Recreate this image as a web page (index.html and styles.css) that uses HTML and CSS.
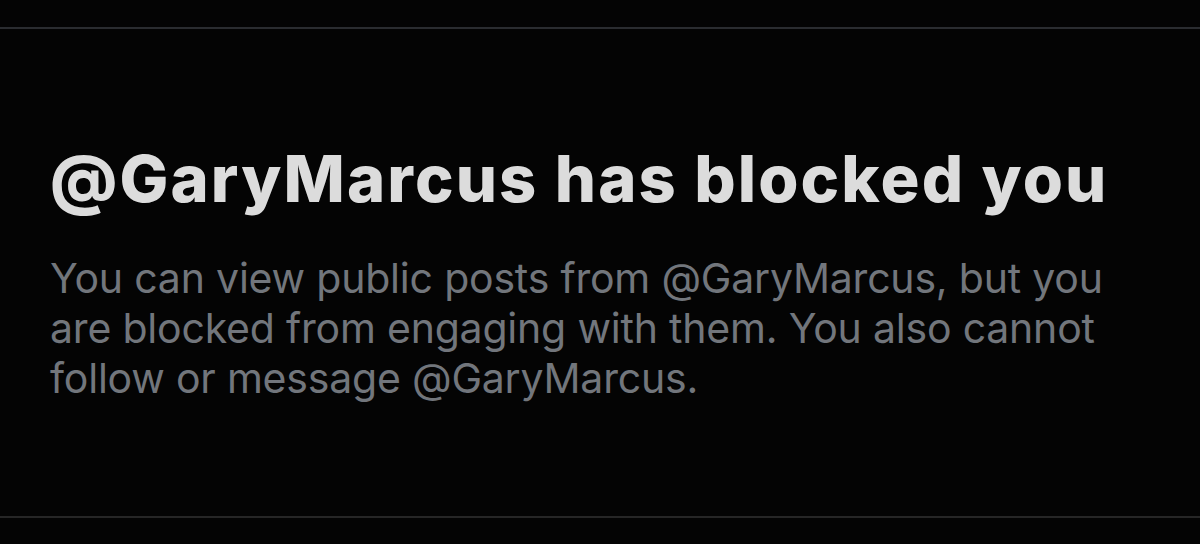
FILE: index.html
```html
<!DOCTYPE html>
<html lang="en">
<head>
<meta charset="utf-8">
<title>Blocked</title>
<link rel="stylesheet" href="styles.css">
</head>
<body>
<main class="panel">
  <section class="notice">
    <h1 class="notice-title">@GaryMarcus has blocked you</h1>
    <p class="notice-text">You can view public posts from @GaryMarcus, but you are blocked from engaging with them. You also cannot follow or message @GaryMarcus.</p>
  </section>
</main>
</body>
</html>
```

FILE: styles.css
```css
html, body {
  margin: 0;
  padding: 0;
  background: #040404;
}
body {
  width: 1200px;
  height: 544px;
  overflow: hidden;
  font-family: Inter, "Liberation Sans", Arial, sans-serif;
}
.panel {
  margin-top: 27px;
  height: 491px;
  border-top: 2px solid #2a2c30;
  border-bottom: 2px solid #262626;
  box-sizing: border-box;
}
.notice {
  padding: 112px 0 0 50px;
  width: 1075px;
}
.notice-title {
  margin: 0;
  font-size: 65px;
  line-height: 76px;
  font-weight: 800;
  color: #dcdcdc;
  letter-spacing: 2.1px;
  white-space: nowrap;
}
.notice-text {
  margin: 36px 0 0;
  font-size: 41px;
  line-height: 50px;
  color: #72767c;
  font-weight: 400;
  letter-spacing: -0.2px;
}
```
